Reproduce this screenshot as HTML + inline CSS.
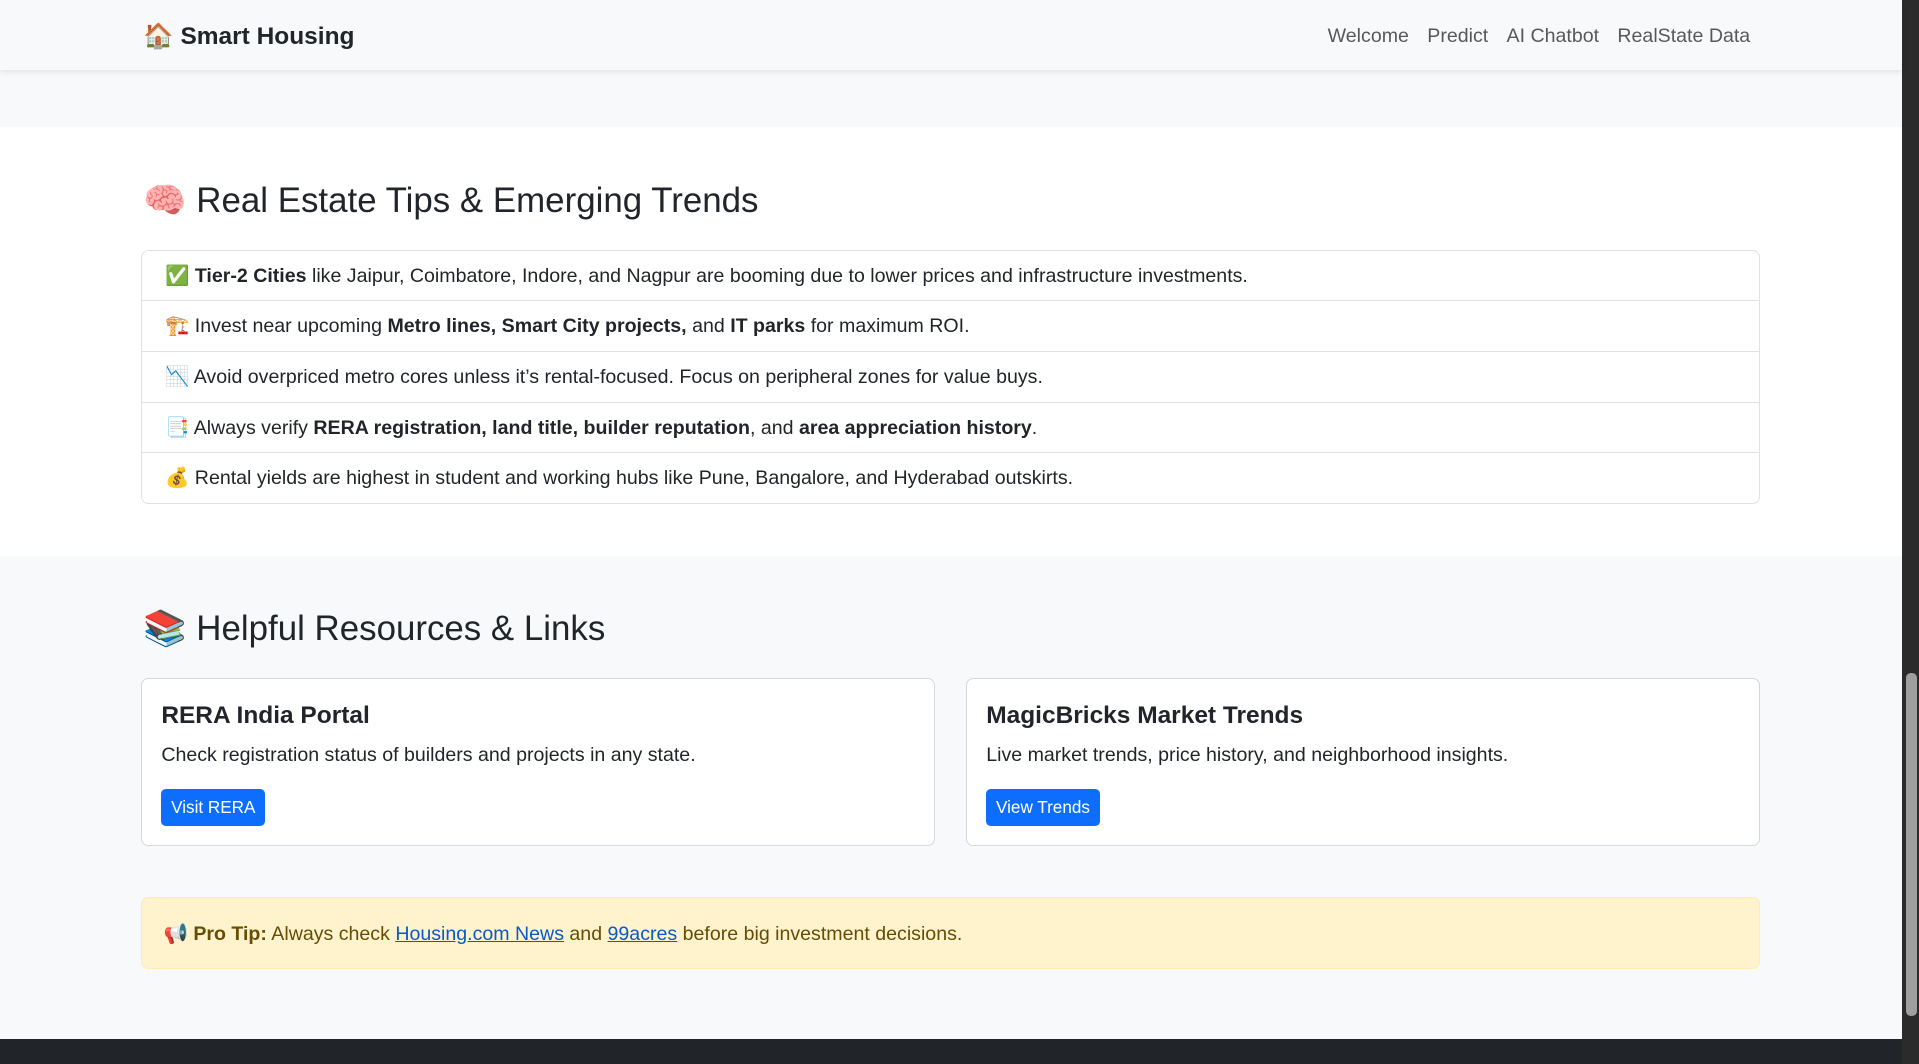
<!DOCTYPE html>
<html><head><meta charset="utf-8"><style>
html{zoom:1.2239}
body{margin:0;width:1568px;height:869px;overflow:hidden;font-family:"Liberation Sans","Noto Sans CJK JP",sans-serif;color:#212529;background:#f8f9fa;position:relative}
.nav{position:absolute;left:0;top:0;width:1554px;height:57px;background:#f8f9fa;box-shadow:0 2px 4px rgba(0,0,0,.08);z-index:2}
.brand{position:absolute;left:117px;top:17px;font-size:20px;font-weight:bold;line-height:26px}
.links{position:absolute;right:124px;top:20px;font-size:16px;color:rgba(0,0,0,.65);line-height:20px}
.links span{margin-left:15px}
.white{position:absolute;left:0;top:104px;width:1554px;height:350px;background:#fff}
h2{position:absolute;left:117px;margin:0;font-weight:normal;font-size:28.5px;line-height:36px}
.lg{position:absolute;left:115px;top:204px;width:1321px;border:1px solid #dee2e6;border-radius:6px;background:#fff;font-size:16px}
.lg div{height:40.6px;line-height:42px;padding-left:19px;border-top:1px solid #dee2e6}
.lg div:first-child{border-top:0}
.card{position:absolute;top:554px;width:647px;height:136px;border:1px solid #d5d8db;border-radius:6px;background:#fff}
.card h5{margin:0;position:absolute;left:16px;top:17px;font-size:20px;line-height:26px}
.card p{margin:0;position:absolute;left:16px;top:52px;font-size:16px;line-height:20px}
.btn{position:absolute;left:16px;top:90px;height:30px;line-height:30px;padding:0 8px;background:#0d6efd;color:#fff;border-radius:4px;font-size:14px}
.alert{position:absolute;left:115px;top:733px;width:1321px;height:57px;background:#fff3cd;border:1px solid #ffecb5;border-radius:6px;color:#664d03;font-size:16px;line-height:60px;box-sizing:content-box}
.alert a{color:#0a58ca;text-decoration:underline}
.foot{position:absolute;left:0;top:849px;width:1554px;height:20px;background:#212529}
.sb{position:absolute;left:1554px;top:0;width:14px;height:869px;background:#2b2b2b}
.thumb{position:absolute;left:1557px;top:550px;width:9px;height:280px;background:#9f9f9f;border-radius:4px}
</style></head><body>
<div class="nav"><div class="brand">🏠 Smart Housing</div>
<div class="links"><span>Welcome</span><span>Predict</span><span>AI Chatbot</span><span>RealState Data</span></div></div>
<div class="white"></div>
<h2 style="top:146px">🧠 Real Estate Tips &amp; Emerging Trends</h2>
<div class="lg">
<div>✅ <b>Tier-2 Cities</b> like Jaipur, Coimbatore, Indore, and Nagpur are booming due to lower prices and infrastructure investments.</div>
<div>🏗️ Invest near upcoming <b>Metro lines, Smart City projects,</b> and <b>IT parks</b> for maximum ROI.</div>
<div>📉 Avoid overpriced metro cores unless it’s rental-focused. Focus on peripheral zones for value buys.</div>
<div>📑 Always verify <b>RERA registration, land title, builder reputation</b>, and <b>area appreciation history</b>.</div>
<div>💰 Rental yields are highest in student and working hubs like Pune, Bangalore, and Hyderabad outskirts.</div>
</div>
<h2 style="top:496px">📚 Helpful Resources &amp; Links</h2>
<div class="card" style="left:115px"><h5>RERA India Portal</h5><p>Check registration status of builders and projects in any state.</p><span class="btn">Visit RERA</span></div>
<div class="card" style="left:789px"><h5>MagicBricks Market Trends</h5><p>Live market trends, price history, and neighborhood insights.</p><span class="btn">View Trends</span></div>
<div class="alert">&nbsp;&nbsp;&nbsp;&nbsp;📢 <b>Pro Tip:</b> Always check <a>Housing.com News</a> and <a>99acres</a> before big investment decisions.</div>
<div class="foot"></div>
<div class="sb"></div><div class="thumb"></div>
</body></html>
